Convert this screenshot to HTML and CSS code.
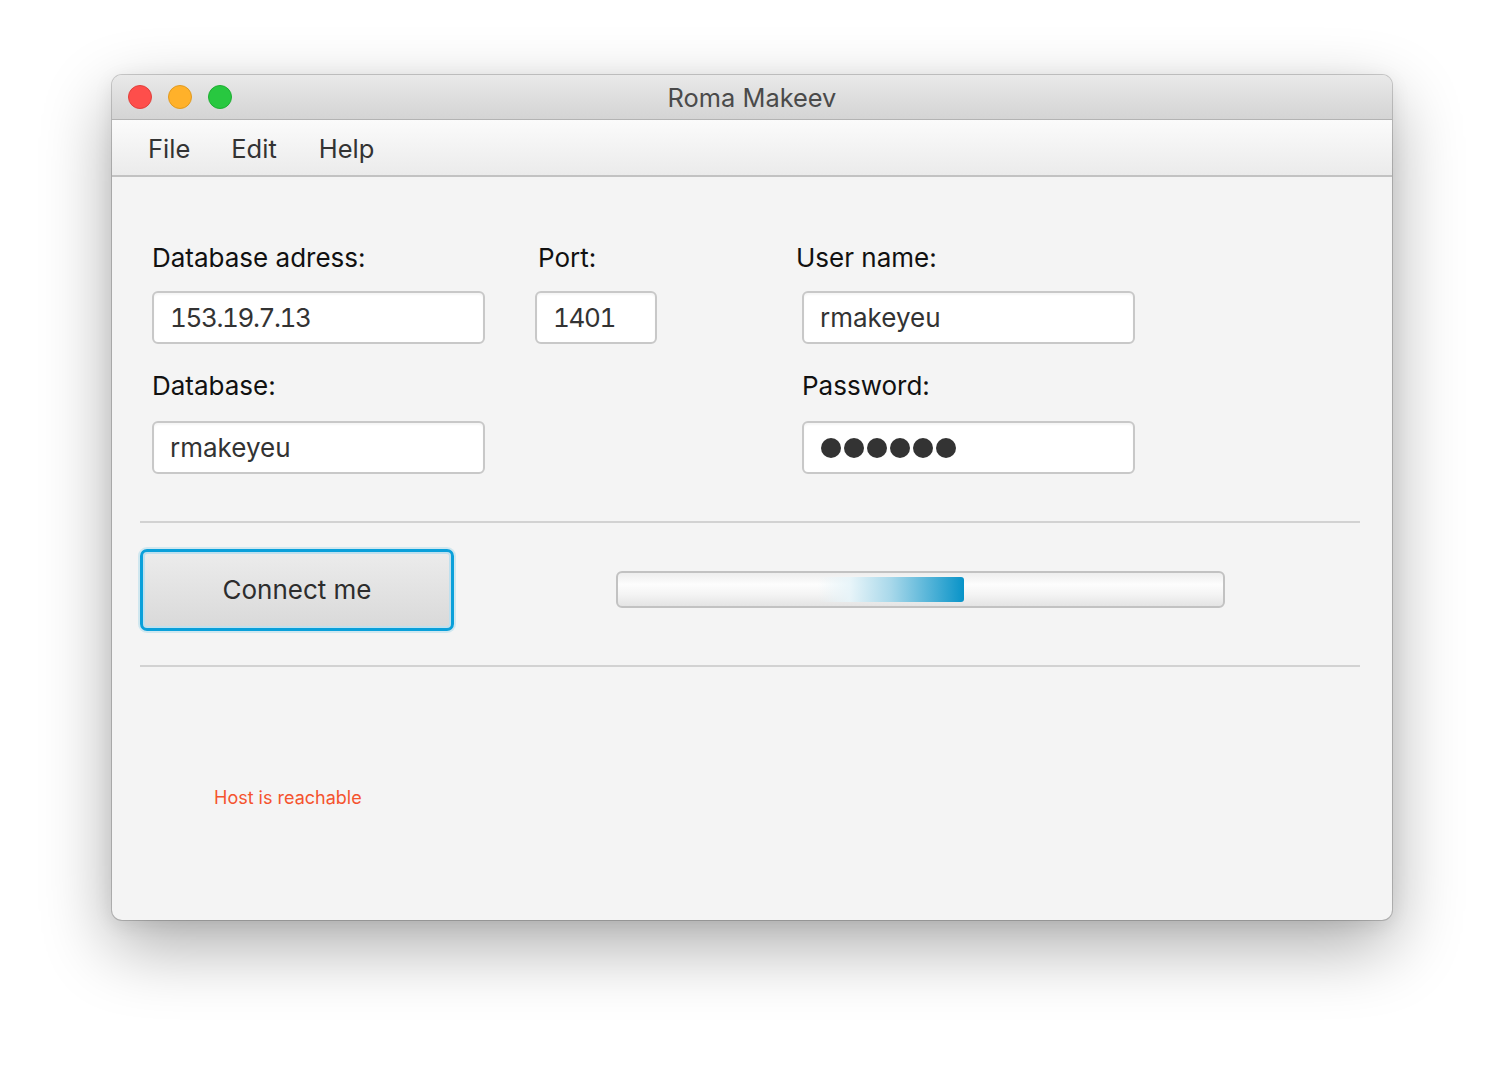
FILE: index.html
```html
<!DOCTYPE html>
<html>
<head>
<meta charset="utf-8">
<link rel="stylesheet" href="styles.css">
</head>
<body>
<div class="window">
  <div class="titlebar">
    <div class="lights">
      <span class="light red"></span>
      <span class="light yellow"></span>
      <span class="light green"></span>
    </div>
    <div class="title">Roma Makeev</div>
  </div>
  <div class="menubar">
    <span class="menu">File</span>
    <span class="menu">Edit</span>
    <span class="menu">Help</span>
  </div>
  <div class="content">
    <div class="form">
      <div class="label c1">Database adress:</div>
      <div class="label c2 port-label">Port:</div>
      <div class="label c3 user-label">User name:</div>
      <div class="field c1 num">153.19.7.13</div>
      <div class="field c2 num">1401</div>
      <div class="field c3">rmakeyeu</div>
      <div class="label c1 row2">Database:</div>
      <div class="label c3 row2">Password:</div>
      <div class="field c1">rmakeyeu</div>
      <div class="field c3 pass"><span class="dot"></span><span class="dot"></span><span class="dot"></span><span class="dot"></span><span class="dot"></span><span class="dot"></span></div>
    </div>
    <div class="sep"></div>
    <div class="actions">
      <button class="btn">Connect me</button>
      <div class="progress"><div class="bar"></div></div>
    </div>
    <div class="sep"></div>
    <div class="status">Host is reachable</div>
  </div>
</div>
</body>
</html>
```
FILE: styles.css
```css
html, body {
  margin: 0;
  padding: 0;
  background: #ffffff;
}
body {
  font-family: Inter, "Liberation Sans", sans-serif;
  padding: 75px 0 0 112px;
  min-height: 1068px;
  box-sizing: border-box;
}
.window {
  width: 1280px;
  height: 845px;
  border-radius: 10px;
  background: #f4f4f4;
  box-shadow: 0 0 0 1px rgba(0,0,0,0.18), 0 26px 70px rgba(0,0,0,0.33), 0 4px 20px rgba(0,0,0,0.08);
  overflow: hidden;
  display: flex;
  flex-direction: column;
}
.titlebar {
  height: 44px;
  flex: none;
  background: linear-gradient(#e9e9e9, #d4d4d4);
  border-bottom: 1px solid #b3b3b3;
  display: flex;
  align-items: center;
  position: relative;
}
.lights {
  display: flex;
  gap: 16px;
  padding-left: 16px;
}
.light {
  width: 24px;
  height: 24px;
  border-radius: 50%;
  box-sizing: border-box;
}
.red { background: #fe4e4b; border: 1px solid #e0403c; }
.yellow { background: #ffb12a; border: 1px solid #e09a20; }
.green { background: #28c840; border: 1px solid #1fae33; }
.title {
  position: absolute;
  left: 0;
  right: 0;
  text-align: center;
  font-size: 25.4px;
  color: #4a4a4a;
  top: 7px;
  line-height: 32px;
}
.menubar {
  flex: none;
  background: linear-gradient(#fbfbfb, #ebebeb);
  border-bottom: 2px solid #c2c2c2;
  display: flex;
  align-items: center;
  padding-left: 36px;
  padding-top: 1px;
  box-sizing: border-box;
  height: 57px;
}
.menu {
  font-size: 25.5px;
  color: #333333;
}
.menu + .menu { margin-left: 41px; }
.menu:nth-child(3) { margin-left: 42px; }
.content {
  flex: 1;
  padding: 64px 32px 0 28px;
}
.form {
  display: grid;
  grid-template-columns: 333px 50px 122px 145px 333px;
  padding-left: 12px;
}
.c1 { grid-column: 1; }
.c2 { grid-column: 3; }
.c3 { grid-column: 5; }
.label {
  font-size: 26px;
  color: #111111;
  line-height: 34px;
  height: 34px;
  margin-bottom: 16px;
}
.row2 { margin-top: 25px; margin-bottom: 18px; }
.port-label { padding-left: 3px; }
.user-label { margin-left: -6px; }
.field {
  height: 53px;
  box-sizing: border-box;
  background: #ffffff;
  border: 2px solid #c8c8c8;
  border-radius: 6px;
  font-size: 26px;
  color: #333333;
  display: flex;
  align-items: center;
  padding-left: 16px;
  box-shadow: inset 0 2px 2px rgba(0,0,0,0.04);
}
.num {
  font-variant-numeric: tabular-nums;
  letter-spacing: -1.4px;
}
.pass {
  gap: 3px;
  padding-left: 17px;
}
.dot {
  width: 20px;
  height: 20px;
  border-radius: 50%;
  background: #333333;
}
.sep {
  height: 2px;
  background: #d2d2d2;
}
.form + .sep { margin-top: 47px; }
.actions {
  display: flex;
  align-items: center;
  height: 142px;
  gap: 162px;
}
.btn {
  width: 314px;
  height: 82px;
  box-sizing: border-box;
  border: 3px solid #0aa0da;
  border-radius: 7px;
  background: linear-gradient(#ececec, #d9d9d9);
  box-shadow: inset 0 0 0 2px #bfe0ee, 0 0 0 2px rgba(10,160,218,0.15);
  font-family: Inter, "Liberation Sans", sans-serif;
  font-size: 26px;
  color: #2d2d2d;
  margin-top: -9px;
  padding: 0;
}
.progress {
  width: 609px;
  height: 37px;
  box-sizing: border-box;
  border: 2px solid #c2c2c2;
  border-radius: 6px;
  background: linear-gradient(#eeeeee, #fdfdfd 35%, #f4f4f4 65%, #e4e4e4);
  display: flex;
  align-items: center;
  margin-top: -9px;
}
.bar {
  margin-left: 200px;
  width: 146px;
  height: 25px;
  border-radius: 0 3px 3px 0;
  background: linear-gradient(90deg, rgba(255,255,255,0), rgba(230,244,249,0.9) 22%, #a8d8ea 50%, #0893c8);
}
.status {
  font-size: 18px;
  color: #f4532e;
  padding-left: 74px;
  margin-top: 118px;
  line-height: 26px;
}
```
